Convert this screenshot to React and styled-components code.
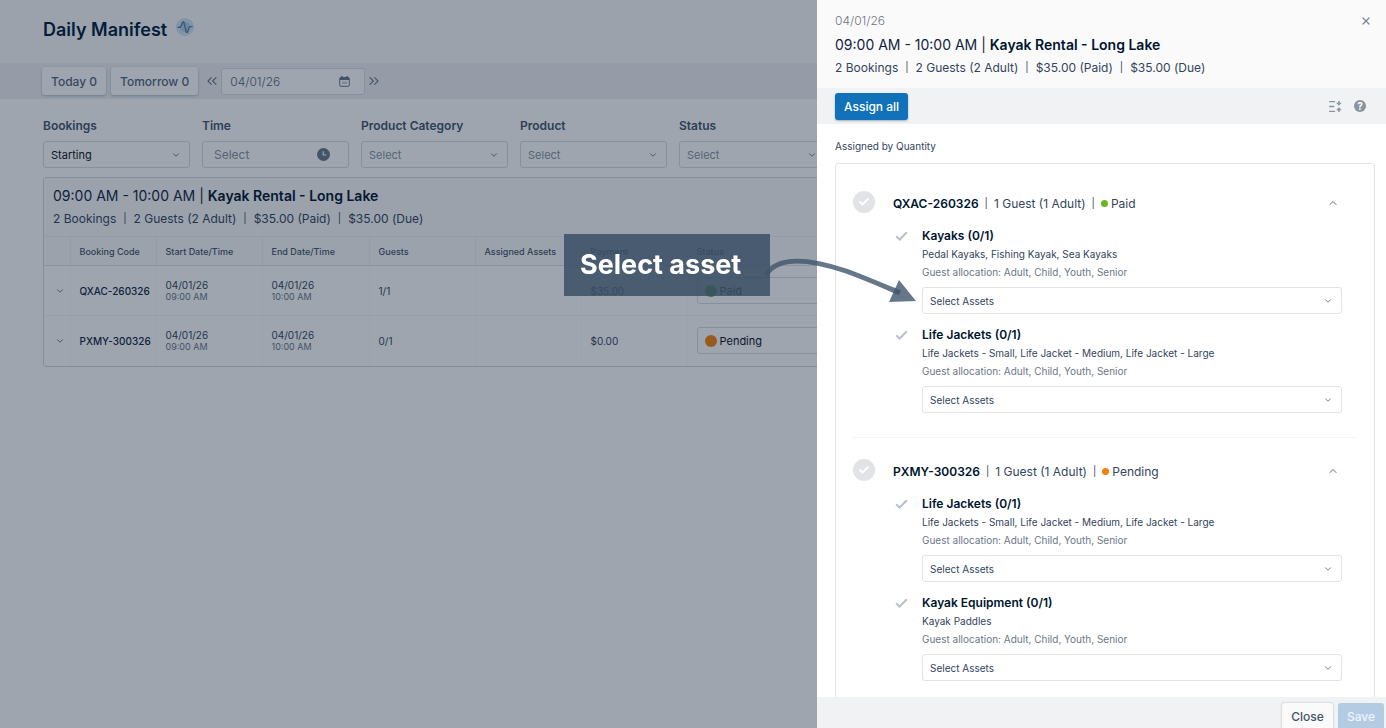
import React from "react";
import styled, { createGlobalStyle } from "styled-components";
import {
  Check,
  ChevronDown,
  ChevronUp,
  ChevronsLeft,
  ChevronsRight,
  X,
} from "lucide-react";

const filters = [
  { label: "Bookings", value: "Starting", filled: true },
  { label: "Time", value: "Select", time: true },
  { label: "Product Category", value: "Select" },
  { label: "Product", value: "Select" },
  { label: "Status", value: "Select" },
];

const bookings = [
  { code: "QXAC-260326", guests: "1/1", payment: "$35.00", status: "Paid", color: "#5cb81e" },
  { code: "PXMY-300326", guests: "0/1", payment: "$0.00", status: "Pending", color: "#f5820f" },
];

const lifeJackets = {
  name: "Life Jackets (0/1)",
  assets: "Life Jackets - Small, Life Jacket - Medium, Life Jacket - Large",
};

const groups = [
  {
    code: "QXAC-260326",
    status: "Paid",
    color: "#6ab81e",
    items: [
      { name: "Kayaks (0/1)", assets: "Pedal Kayaks, Fishing Kayak, Sea Kayaks" },
      lifeJackets,
    ],
  },
  {
    code: "PXMY-300326",
    status: "Pending",
    color: "#f0800f",
    items: [lifeJackets, { name: "Kayak Equipment (0/1)", assets: "Kayak Paddles" }],
  },
];

const TripSummary = () => (
  <>
    <TripTitle>
      09:00 AM - 10:00 AM | <strong>Kayak Rental - Long Lake</strong>
    </TripTitle>
    <TripFacts>
      <span>2 Bookings</span>
      <Bar>|</Bar>
      <span>2 Guests (2 Adult)</span>
      <Bar>|</Bar>
      <span>$35.00 (Paid)</span>
      <Bar>|</Bar>
      <span>$35.00 (Due)</span>
    </TripFacts>
  </>
);

const PulseIcon = () => (
  <svg width="18" height="18" viewBox="0 0 18 18" fill="none">
    <circle cx="9" cy="9" r="9" fill="#cfe4f5" />
    <circle cx="9" cy="9" r="5" fill="#a5d0f0" />
    <path
      d="M2 9.2h2.4L6.8 4h1l2.6 10.4h1L13.6 8.6H16"
      stroke="#6b7c90"
      strokeWidth="1.4"
      strokeLinecap="round"
      strokeLinejoin="round"
    />
  </svg>
);

const CalendarIcon = () => (
  <svg width="11" height="11" viewBox="0 0 11 11" fill="none" stroke="#6b7787">
    <rect x="0.7" y="1.5" width="9.6" height="8.8" rx="1" />
    <path d="M0.7 3h9.6" strokeWidth="2" />
    <path d="M2.8 0v2M8.2 0v2" strokeWidth="1.4" />
    <path d="M3 6.8h5" strokeWidth="2.4" opacity="0.35" />
  </svg>
);

const ClockIcon = () => (
  <svg width="13" height="13" viewBox="0 0 13 13" fill="none">
    <circle cx="6.5" cy="6.5" r="6.5" fill="#6b7787" />
    <path d="M6.2 3.2V7h3.2" stroke="#fff" strokeWidth="1.2" />
  </svg>
);

const CollapseIcon = () => (
  <svg width="13" height="11" viewBox="0 0 13 11" fill="none">
    <path d="M0.6 0.7h5M0.6 5.5h4.2M0.6 10.3h5" stroke="#8a93a2" strokeWidth="1.3" strokeLinecap="round" />
    <path d="M9.9 0v2M9.9 11V9" stroke="#8a93a2" strokeWidth="1.5" />
    <path d="M7.1 1.8h5.6L9.9 4.8zM7.1 9.2h5.6L9.9 6.2z" fill="#8a93a2" />
  </svg>
);

const TickIcon = () => (
  <svg width="13" height="10" viewBox="0 0 13 10" fill="none">
    <path d="M1.2 5.2l3.4 3.4L11.8 1.2" stroke="#b9bfc9" strokeWidth="2" />
  </svg>
);

const App = () => {
  return (
    <>
      <GlobalStyle />
      <Page>
        <TitleBar>
          <h1>Daily Manifest</h1>
          <PulseIcon />
        </TitleBar>
        <Toolbar>
          <DayButton type="button">Today 0</DayButton>
          <DayButton type="button">Tomorrow 0</DayButton>
          <StepButton type="button" aria-label="Previous day">
            <ChevronsLeft size={16} strokeWidth={1.6} />
          </StepButton>
          <DateBox>
            <input type="text" aria-label="Date" defaultValue="04/01/26" />
            <CalendarIcon />
          </DateBox>
          <StepButton type="button" aria-label="Next day">
            <ChevronsRight size={16} strokeWidth={1.6} />
          </StepButton>
        </Toolbar>
        <Filters>
          {filters.map((filter) => (
            <Filter key={filter.label}>
              <span>{filter.label}</span>
              {filter.time ? (
                <TimeBox>
                  <input type="text" placeholder={filter.value} />
                  <ClockIcon />
                </TimeBox>
              ) : (
                <SelectBox>
                  <Select $muted={!filter.filled}>
                    <option>{filter.value}</option>
                  </Select>
                  <ChevronDown size={10} />
                </SelectBox>
              )}
            </Filter>
          ))}
        </Filters>
        <TripCard>
          <TripHead>
            <TripSummary />
          </TripHead>
          <BookingTable>
            <colgroup>
              <col width="26" />
              <col width="86" />
              <col width="106" />
              <col width="107" />
              <col width="106" />
              <col width="106" />
              <col width="106" />
              <col />
            </colgroup>
            <thead>
              <tr>
                <th aria-label="Expand" />
                <th>Booking Code</th>
                <th>Start Date/Time</th>
                <th>End Date/Time</th>
                <th>Guests</th>
                <th>Assigned Assets</th>
                <th>Payment</th>
                <th>Status</th>
              </tr>
            </thead>
            <tbody>
              {bookings.map((booking) => (
                <tr key={booking.code}>
                  <td>
                    <ExpandButton type="button" aria-label={`Expand ${booking.code}`}>
                      <ChevronDown size={10} />
                    </ExpandButton>
                  </td>
                  <td>
                    <Code>{booking.code}</Code>
                  </td>
                  <td>
                    04/01/26<small>09:00 AM</small>
                  </td>
                  <td>
                    04/01/26<small>10:00 AM</small>
                  </td>
                  <td>{booking.guests}</td>
                  <td />
                  <td>{booking.payment}</td>
                  <td>
                    <SelectBox>
                      <StatusDot $color={booking.color} />
                      <Select $indent aria-label={`Status of ${booking.code}`}>
                        <option>{booking.status}</option>
                      </Select>
                      <ChevronDown size={10} />
                    </SelectBox>
                  </td>
                </tr>
              ))}
            </tbody>
          </BookingTable>
        </TripCard>
      </Page>

      <Overlay>
        <Drawer>
          <DrawerHead>
            <DrawerDate>
              04/01/26
              <CloseButton type="button" aria-label="Close panel">
                <X size={12} strokeWidth={2.6} />
              </CloseButton>
            </DrawerDate>
            <TripSummary />
          </DrawerHead>
          <DrawerTools>
            <AssignButton type="button">Assign all</AssignButton>
            <ToolIcon type="button" aria-label="Collapse all">
              <CollapseIcon />
            </ToolIcon>
            <HelpButton type="button" aria-label="Help">
              ?
            </HelpButton>
          </DrawerTools>
          <DrawerBody>
            <Caption>Assigned by Quantity</Caption>
            <Panel>
              {groups.map((group) => (
                <Group key={group.code}>
                  <GroupHead>
                    <Badge>
                      <Check size={12} strokeWidth={3.6} />
                    </Badge>
                    <strong>{group.code}</strong>
                    <Bar>|</Bar>
                    <span>1 Guest (1 Adult)</span>
                    <Bar>|</Bar>
                    <Dot $color={group.color} />
                    <span>{group.status}</span>
                    <FoldButton type="button" aria-label={`Collapse ${group.code}`}>
                      <ChevronUp size={12} />
                    </FoldButton>
                  </GroupHead>
                  {group.items.map((item) => (
                    <Item key={item.name}>
                      <TickIcon />
                      <ItemBody>
                        <h3>{item.name}</h3>
                        <p>{item.assets}</p>
                        <Allocation>Guest allocation: Adult, Child, Youth, Senior</Allocation>
                        <SelectBox>
                          <Select $soft aria-label={`Assets for ${item.name}`}>
                            <option>Select Assets</option>
                          </Select>
                          <ChevronDown size={10} />
                        </SelectBox>
                      </ItemBody>
                    </Item>
                  ))}
                </Group>
              ))}
            </Panel>
          </DrawerBody>
          <DrawerFoot>
            <FootButton type="button">Close</FootButton>
            <FootButton type="button" $primary>
              Save
            </FootButton>
          </DrawerFoot>
        </Drawer>
      </Overlay>

      <Callout>Select asset</Callout>
      <Arrow width="156" height="50" viewBox="0 0 156 50" fill="none">
        <path
          d="M4 21C16 1 48 5 84 17C106 25 124 33 138 39"
          stroke="#3f556c"
          strokeOpacity="0.8"
          strokeWidth="5"
        />
        <path d="M137 26L154 47L127 48Z" fill="#3f556c" fillOpacity="0.8" />
      </Arrow>
    </>
  );
};

const GlobalStyle = createGlobalStyle`
  * {
    box-sizing: border-box;
  }
  body {
    margin: 0;
    overflow: hidden;
    background: #fff;
    color: #33455d;
    font-family: Inter, "Liberation Sans", sans-serif;
    font-size: 10px;
  }
  h1, h2, h3, p {
    margin: 0;
  }
  button, input, select {
    font: inherit;
    color: inherit;
  }
  button {
    padding: 0;
    border: 0;
    background: none;
    cursor: pointer;
  }
  svg {
    display: block;
    flex: none;
  }
`;

const Page = styled.div`
  isolation: isolate;
  height: 100vh;
  overflow: hidden;
  background: #fff;
`;

const TitleBar = styled.header`
  display: flex;
  gap: 9px;
  height: 63px;
  padding: 18px 43px 0;
  background: #fafafa;

  h1 {
    font-size: 18px;
    line-height: 24px;
    font-weight: 600;
    color: #001c3d;
  }
`;

const Toolbar = styled.div`
  display: flex;
  align-items: center;
  height: 36px;
  padding: 0 42px;
  background: #f0f1f3;
`;

const DayButton = styled.button`
  height: 28px;
  margin-right: 5px;
  padding: 0 9px;
  border-radius: 3px;
  background: #fff;
  box-shadow: 0 1px 3px rgba(30, 50, 80, 0.3);
  font-size: 12px;
  font-weight: 500;
  color: #56657a;
`;

const StepButton = styled.button`
  display: flex;
  justify-content: center;
  width: 18px;
  color: #6b7787;
`;

const DateBox = styled.label`
  display: flex;
  align-items: center;
  width: 144px;
  height: 27px;
  padding: 0 14px 0 8px;
  border: 1px solid #dadde3;
  border-radius: 3px;
  background: #fff;

  input {
    flex: 1;
    min-width: 0;
    padding: 0;
    border: 0;
    outline: 0;
    background: none;
    font-size: 12px;
    font-weight: 300;
    color: #56657a;
  }
`;

const Filters = styled.div`
  display: flex;
  gap: 12px;
  padding: 18px 43px 9px;
`;

const Filter = styled.label`
  flex: none;
  width: 147px;

  > span {
    display: block;
    height: 24px;
    line-height: 18px;
    font-size: 12px;
    font-weight: 600;
    color: #44546a;
  }
`;

const SelectBox = styled.div`
  display: grid;
  align-items: center;

  > * {
    grid-area: 1 / 1;
  }
  > svg {
    justify-self: end;
    margin-right: 9px;
    color: #56657a;
    pointer-events: none;
  }
`;

const Select = styled.select`
  appearance: none;
  width: 100%;
  height: 27px;
  padding: 0 ${({ $indent }) => ($indent ? 22 : 7)}px;
  border: 1px solid ${({ $soft }) => ($soft ? "#e1e3e8" : "#d9dce2")};
  border-radius: 3px;
  background: #fff;
  font-size: ${({ $soft }) => ($soft ? 10 : 11)}px;
  color: ${({ $muted, $soft }) => ($muted ? "#8a93a2" : $soft ? "#33455d" : "#0b1420")};
`;

const TimeBox = styled.div`
  display: flex;
  align-items: center;
  height: 27px;
  padding: 0 18px 0 11px;
  border: 1px solid #d9dce2;
  border-radius: 3px;
  background: #fff;

  input {
    flex: 1;
    min-width: 0;
    padding: 0;
    border: 0;
    outline: 0;
    background: none;
    font-size: 12px;
  }
  input::placeholder {
    color: #8a93a2;
  }
`;

const TripCard = styled.section`
  margin: 0 43px;
  border: 1px solid #d3d7de;
  border-radius: 3px;
`;

const TripHead = styled.div`
  height: 58px;
  padding: 6px 9px 0;
  background: #fafafa;
`;

const TripTitle = styled.h2`
  line-height: 24px;
  font-size: 14px;
  font-weight: 400;
  color: #10243f;

  strong {
    font-weight: 600;
    color: #00142e;
  }
`;

const TripFacts = styled.p`
  display: flex;
  gap: 7px;
  line-height: 21px;
  font-size: 12px;
`;

const Bar = styled.span`
  font-size: 10px;
`;

const BookingTable = styled.table`
  width: 100%;
  table-layout: fixed;
  border-collapse: collapse;

  th, td {
    padding: 0 9px;
    border-right: 1px solid #f9fafb;
    text-align: left;
    white-space: nowrap;
  }
  th {
    height: 29px;
    border-top: 1px solid #eceef1;
    border-right-color: #f0f1f3;
    border-bottom: 1px solid #dfe2e6;
    background: #fafafa;
    font-size: 9px;
    font-weight: 500;
    color: #44546a;
  }
  td {
    height: 50px;
    border-bottom: 1px solid #f3f4f6;
    line-height: 12px;
  }
  tbody tr:last-child td {
    border-bottom: 0;
  }
  small {
    display: block;
    line-height: 11px;
    font-size: 9px;
    color: #6b7787;
  }
`;

const ExpandButton = styled.button`
  display: block;
  margin-left: 2px;
  color: #56657a;
`;

const Code = styled.span`
  font-weight: 500;
  color: #10243f;
`;

const StatusDot = styled.span`
  z-index: 1;
  width: 12px;
  height: 12px;
  margin-left: 8px;
  border-radius: 50%;
  background: ${({ $color }) => $color};
`;

const Overlay = styled.div`
  position: fixed;
  inset: 0;
  display: flex;
  justify-content: flex-end;
  background: rgba(13, 30, 56, 0.4);
`;

const Drawer = styled.aside`
  display: flex;
  flex-direction: column;
  width: 41%;
  min-width: 569px;
  background: #fff;
`;

const DrawerHead = styled.div`
  height: 88px;
  padding: 9px 14px 0 18px;
  background: #fafafa;
`;

const DrawerDate = styled.div`
  display: flex;
  align-items: center;
  justify-content: space-between;
  height: 24px;
  font-size: 12px;
  font-weight: 300;
  line-height: 22px;
  color: #6b7787;
`;

const CloseButton = styled.button`
  color: #7c8796;
`;

const DrawerTools = styled.div`
  display: flex;
  align-items: center;
  gap: 12px;
  height: 36px;
  padding: 0 20px 0 18px;
  background: #f0f2f4;
`;

const AssignButton = styled.button`
  height: 27px;
  margin-right: auto;
  padding: 0 9px;
  border-radius: 3px;
  background: #1172ba;
  box-shadow: 0 1px 2px rgba(30, 50, 80, 0.35);
  font-size: 12px;
  font-weight: 500;
  color: #fff;
`;

const ToolIcon = styled.button`
  display: block;
`;

const HelpButton = styled.button`
  width: 12px;
  height: 12px;
  border-radius: 50%;
  background: #8a93a2;
  line-height: 12px;
  font-size: 10px;
  font-weight: 700;
  color: #fff;
`;

const DrawerBody = styled.div`
  flex: 1;
  min-height: 0;
  padding: 13px 11px 0 18px;
  overflow: hidden;
`;

const Caption = styled.p`
  height: 26px;
  line-height: 18px;
`;

const Panel = styled.div`
  padding: 6px 17px 0;
  border: 1px solid #e1e3e8;
  border-radius: 3px;
`;

const Group = styled.section`
  padding: 21px 0 24px;

  & + & {
    border-top: 1px solid #f3f4f6;
  }
`;

const GroupHead = styled.div`
  display: flex;
  align-items: center;
  gap: 6px;
  height: 24px;
  font-size: 12px;

  strong {
    font-weight: 600;
    color: #00142e;
  }
`;

const Badge = styled.span`
  display: grid;
  place-items: center;
  width: 22px;
  height: 22px;
  margin: 0 12px 3px 0;
  border-radius: 50%;
  background: #e1e3e7;
  color: #fff;
`;

const Dot = styled.span`
  width: 7px;
  height: 7px;
  margin-right: -3px;
  border-radius: 50%;
  background: ${({ $color }) => $color};
`;

const FoldButton = styled.button`
  margin: 0 18px 0 auto;
  color: #56657a;
`;

const Item = styled.div`
  display: flex;
  gap: 14px;
  padding: 12px 15px 0 42px;

  > svg {
    margin-top: 4px;
  }
`;

const ItemBody = styled.div`
  flex: 1;

  h3, p {
    line-height: 18px;
  }
  h3 {
    font-size: 12px;
    font-weight: 600;
    color: #00142e;
  }
`;

const Allocation = styled.p`
  && {
    margin-bottom: 6px;
    color: #6b7787;
  }
`;

const DrawerFoot = styled.div`
  display: flex;
  flex: 0 0 31px;
  justify-content: flex-end;
  gap: 5px;
  padding: 6px 2px 0;
  overflow: hidden;
  background: #f0f2f4;
`;

const FootButton = styled.button`
  height: 27px;
  padding: 0 9px;
  border-radius: 3px;
  background: ${({ $primary }) => ($primary ? "#b3cce3" : "#fafafa")};
  box-shadow: ${({ $primary }) => ($primary ? "none" : "0 0 2px rgba(30, 50, 80, 0.35)")};
  font-size: 12px;
  font-weight: 500;
  color: ${({ $primary }) => ($primary ? "#eef4f9" : "#44546a")};
`;

const Callout = styled.div`
  position: absolute;
  top: 234px;
  left: 564px;
  width: 206px;
  padding: 13px 16px;
  background: rgba(57, 79, 101, 0.85);
  line-height: 36px;
  font-size: 27px;
  font-weight: 700;
  color: #fff;
  white-space: nowrap;
`;

const Arrow = styled.svg`
  position: absolute;
  top: 254px;
  left: 762px;
`;

export default App;
